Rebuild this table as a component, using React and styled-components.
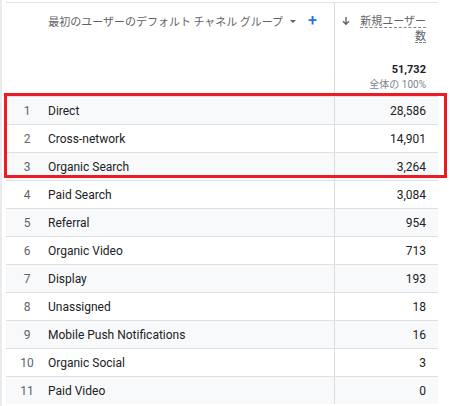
import React from "react";
import styled, { createGlobalStyle } from "styled-components";

const rows = [
  { label: "Direct", value: "28,586" },
  { label: "Cross-network", value: "14,901" },
  { label: "Organic Search", value: "3,264" },
  { label: "Paid Search", value: "3,084" },
  { label: "Referral", value: "954" },
  { label: "Organic Video", value: "713" },
  { label: "Display", value: "193" },
  { label: "Unassigned", value: "18" },
  { label: "Mobile Push Notifications", value: "16" },
  { label: "Organic Social", value: "3" },
  { label: "Paid Video", value: "0" },
];

const GlobalStyle = createGlobalStyle`
  html, body {
    margin: 0;
    padding: 0;
    background: #ffffff;
  }
  body {
    font-family: Roboto, "Noto Sans CJK JP", Arial, sans-serif;
    color: #202124;
  }
`;

const Page = styled.div`
  position: relative;
  width: 450px;
  height: 406px;
  overflow: hidden;
  border-left: 2px solid #ebebeb;
  box-sizing: border-box;
`;

const Table = styled.div`
  margin-left: 4px;
  margin-top: 2px;
  width: 432px;
  border-top: 1px solid #e3e3e3;
`;

const HeaderRow = styled.div`
  display: grid;
  grid-template-columns: 328px 104px;
  height: 93px;
`;

const HeaderCell = styled.div`
  display: flex;
  flex-direction: column;
  align-items: flex-end;
  padding: 10px 12px 0 0;
  box-sizing: border-box;
  border-left: ${(p) => (p.$divider ? "1px solid #dadce0" : "none")};
`;

const DimTitle = styled.div`
  display: flex;
  align-items: center;
  font-family: "Noto Sans CJK JP", sans-serif;
  font-size: 11px;
  line-height: 16px;
  color: #5f6368;
  padding-right: 5px;
`;

const Caret = styled.span`
  width: 0;
  height: 0;
  margin-left: 7px;
  border-left: 3px solid transparent;
  border-right: 3px solid transparent;
  border-top: 3px solid #5f6368;
`;

const Plus = styled.span`
  margin-left: 12px;
  color: #1a73e8;
  font-family: Roboto, sans-serif;
  font-size: 16px;
  font-weight: 500;
  line-height: 16px;
`;

const MetricTitle = styled.div`
  display: flex;
  align-items: flex-start;
  font-family: "Noto Sans CJK JP", sans-serif;
  font-size: 11px;
  line-height: 15px;
  color: #5f6368;
`;

const Arrow = styled.svg`
  width: 10px;
  height: 10px;
  margin: 3px 9px 0 0;
  flex: none;
`;

const MetricLabel = styled.div`
  display: flex;
  flex-direction: column;
  align-items: flex-end;
`;

const Dashed = styled.span`
  border-bottom: 1px dashed #80868b;
  line-height: 14px;
`;

const Total = styled.div`
  margin-top: 20px;
  font-size: 11px;
  font-weight: 700;
  line-height: 14px;
  color: #202124;
`;

const Share = styled.div`
  margin-top: 1px;
  font-family: Roboto, "Noto Sans CJK JP", sans-serif;
  font-size: 10px;
  line-height: 14px;
  color: #80868b;
`;

const Row = styled.div`
  display: grid;
  grid-template-columns: 328px 104px;
  height: 28px;
  box-sizing: border-box;
  border-top: 1px solid #e0e0e0;
  background: ${(p) => (p.$shaded ? "#f8f9fa" : "#ffffff")};
  font-size: 12px;
`;

const LabelCell = styled.div`
  display: flex;
  align-items: center;
`;

const Index = styled.span`
  width: 42px;
  text-align: center;
  color: #5f6368;
`;

const Label = styled.span`
  color: #202124;
`;

const ValueCell = styled.div`
  display: flex;
  align-items: center;
  justify-content: flex-end;
  padding-right: 12px;
  border-left: 1px solid #dadce0;
  color: #202124;
`;

const Highlight = styled.div`
  position: absolute;
  left: 2px;
  top: 93px;
  width: 443px;
  height: 85px;
  border: 3px solid #ec1c24;
  box-sizing: border-box;
  pointer-events: none;
`;

export default function App() {
  return (
    <>
      <GlobalStyle />
      <Page>
        <Table>
          <HeaderRow>
            <HeaderCell>
              <DimTitle>
                最初のユーザーのデフォルト チャネル グループ
                <Caret />
                <Plus>+</Plus>
              </DimTitle>
            </HeaderCell>
            <HeaderCell $divider>
              <MetricTitle>
                <Arrow viewBox="0 0 10 10">
                  <path d="M5 1v7M2 5.2l3 3 3-3" stroke="#5f6368" strokeWidth="1.4" fill="none" />
                </Arrow>
                <MetricLabel>
                  <Dashed>新規ユーザー</Dashed>
                  <Dashed>数</Dashed>
                </MetricLabel>
              </MetricTitle>
              <Total>51,732</Total>
              <Share>全体の 100%</Share>
            </HeaderCell>
          </HeaderRow>
          {rows.map((r, i) => (
            <Row key={r.label} $shaded={i % 2 === 0}>
              <LabelCell>
                <Index>{i + 1}</Index>
                <Label>{r.label}</Label>
              </LabelCell>
              <ValueCell>{r.value}</ValueCell>
            </Row>
          ))}
        </Table>
        <Highlight />
      </Page>
    </>
  );
}
